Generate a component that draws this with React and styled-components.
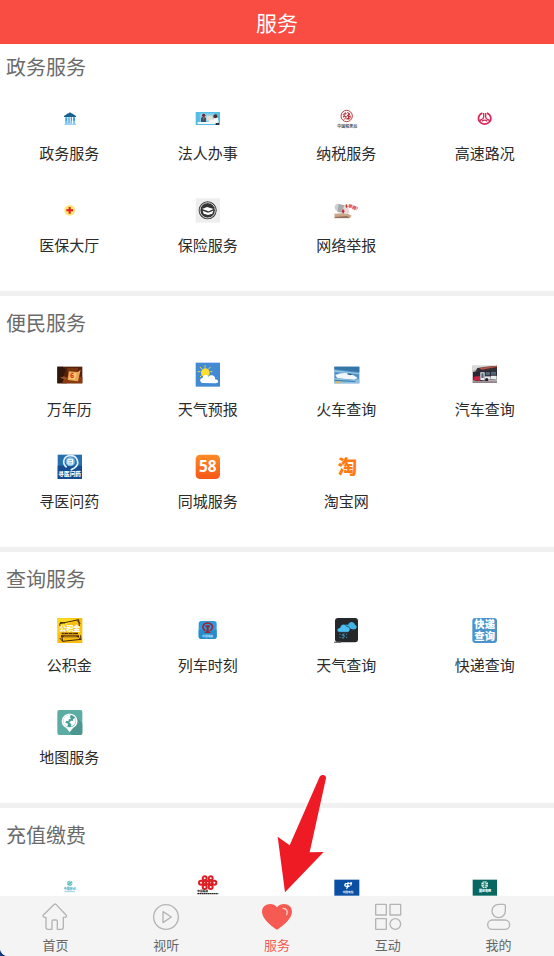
import styled, { createGlobalStyle, css } from "styled-components";

const GlobalStyle = createGlobalStyle`
  * {
    box-sizing: border-box;
  }

  body {
    margin: 0;
    background: #123a86;
    font-family: "Noto Sans CJK SC", sans-serif;
  }
`;

const Shell = styled.div`
  display: flex;
  flex-direction: column;
  height: 100vh;
  background: #fff;
  border-bottom-left-radius: 8px;
  overflow: hidden;
`;

const Header = styled.header`
  flex: none;
  display: flex;
  align-items: center;
  justify-content: center;
  height: 44px;
  background: #f94d43;
`;

const PageTitle = styled.h1`
  margin: 0;
  font-size: 21px;
  font-weight: 400;
  line-height: 32px;
  color: #fff;
`;

const Main = styled.main`
  flex: 1;
  min-height: 0;
  overflow-y: auto;
  scrollbar-width: none;
`;

const StyledSection = styled.section`
  margin-bottom: 4px;
  padding-bottom: 17px;
  border-bottom: 5px solid #f1f1f1;
`;

const SectionTitle = styled.h2`
  margin: 0;
  padding: 0 6px;
  font-size: 20px;
  font-weight: 400;
  line-height: 46px;
  color: #6b6b6b;
`;

const Grid = styled.div`
  display: grid;
  grid-template-columns: repeat(4, 1fr);
`;

const Service = styled.a`
  display: flex;
  flex-direction: column;
  align-items: center;
  gap: 11px;
  height: 92px;
  padding-top: 16px;
  font-size: 15px;
  line-height: 22px;
  color: #2b2b2b;
  text-decoration: none;
`;

const Picture = styled.svg`
  flex: none;
  display: block;
  width: 25px;
  height: 25px;
  overflow: visible;
  font-family: "Noto Sans CJK SC", sans-serif;
`;

const Nav = styled.nav`
  flex: none;
  display: grid;
  grid-template-columns: repeat(5, 1fr);
  height: 60px;
  background: #f4f4f4;
`;

const Tab = styled.a`
  position: relative;
  display: flex;
  flex-direction: column;
  align-items: center;
  gap: 4px;
  padding-top: 7px;
  font-size: 13px;
  line-height: 20px;
  color: #666;
  text-decoration: none;

  ${(props) =>
    props.$active &&
    css`
      color: #f65b53;
    `}
`;

const TabIcon = styled.svg`
  flex: none;
  display: block;
  width: 28px;
  height: 28px;
  overflow: visible;
  fill: none;
  stroke: #b4b4b6;
  stroke-width: 4;
  stroke-linejoin: round;
`;

const Arrow = styled.svg`
  position: absolute;
  left: 50%;
  bottom: 63px;
  width: 50px;
  height: 119px;
  fill: #ee1b24;
  pointer-events: none;
`;

// every picture is drawn on a 75 x 75 canvas
const pictures = {
  government: (
    <>
      <path d="M21 30 33 22h3l3-4 3 4h2l13 8v3H21z" fill="#17608f" />
      <path d="M25 34h6v19h-6zM34 34h4v19h-4zM41 34h4v19h-4zM48 34h6v19h-6z" fill="#3d9fe0" />
      <path d="M25 44h6v9h-6zM34 44h4v9h-4zM41 44h4v9h-4zM48 44h6v9h-6z" fill="#7cc8f4" />
      <path d="M22 53h35v4H22z" fill="#9ed4f3" />
    </>
  ),
  legal: (
    <>
      <path d="M2 18h73v39H2z" fill="#55bde5" />
      <path d="M14 22h46v27H14z" fill="#86cdea" />
      <path d="M35 29h18v15H35z" fill="#e8ddcb" />
      <path d="M18 48V36l5-4h5l5 5v11z" fill="#3d5066" />
      <circle cx="26" cy="28" r="5" fill="#6b2c32" />
      <path d="m24 34 2 9 3-9z" fill="#e8584c" />
      <path d="M40 48c6-8 10-8 15-7l5-10 9 5 2 14z" fill="#f8f9f9" />
      <circle cx="61" cy="31" r="6" fill="#473035" />
      <path d="M8 48h59v6H8z" fill="#f3f7f8" />
      <path d="M62 51h10v6H62z" fill="#263241" />
    </>
  ),
  tax: (
    <>
      <circle cx="38" cy="30" r="17" fill="#fff" stroke="#bd3c41" strokeWidth="3" />
      <path
        d="M26 26q6-4 12-3M34 19q0 8-7 14M27 33q7-3 11-1l-8 9M40 19l8 5-9 5 11 4M43 22q3 10-1 20M36 39q7-4 12 0M48 28v9"
        fill="none"
        stroke="#b62d34"
        strokeWidth="3"
      />
      <text x="40" y="65" fontSize="12" fontWeight="700" textAnchor="middle" fill="#555">
        中国税务局
      </text>
    </>
  ),
  highway: (
    <g fill="none" stroke="#d92455" strokeWidth="5">
      <path d="M31 21c-14 6-15 22-5 29M45 21c14 6 15 22 5 29M26 50c7 5 17 5 24 0" />
      <path d="M35 21v12q0 5-7 8l-5 3M41 21v12q0 5 7 8l5 3" strokeWidth="4" />
      <path d="M30 46q8-7 16 0" strokeWidth="4" />
    </g>
  ),
  medical: (
    <>
      <circle cx="38" cy="37" r="17" fill="#fff0a0" />
      <circle cx="38" cy="37" r="14" fill="#ffe36d" />
      <path d="M35 27h6v7h7v6h-7v7h-6v-7h-7v-6h7z" fill="#e71919" />
    </>
  ),
  insurance: (
    <>
      <path d="M2 1h73v73H2z" fill="#eee" />
      <circle cx="38" cy="37" r="27" fill="#333" />
      <circle cx="38" cy="37" r="23" fill="none" stroke="#ddd" strokeWidth="3" />
      <path d="m21 33 15-6 20 6-15 7zM23 38l16 6 16-6-3 9-13 4-13-4z" fill="#fff" />
    </>
  ),
  report: (
    <>
      <path d="m1 47 36-2 16 8-6 8H2z" fill="#cba783" />
      <path d="m2 57 37-3 8 6H2z" fill="#92705b" />
      <circle cx="13" cy="28" r="11" fill="#cbd0d5" />
      <path d="m14 18 18 4-2 23-20-3z" fill="#aaa9aa" />
      <path d="m22 39 8-13 10-5 7 23-13 5z" fill="#ead7d6" />
      <path d="m23 40 4-8 5 7-4 8zM34 22l4-4 3 9-4 3z" fill="#b93337" />
      <text x="41" y="27" fontSize="13" fontWeight="900" fill="#df4b54" transform="rotate(20 41 27)">
        举报!
      </text>
    </>
  ),
  calendar: (
    <>
      <path d="M1 14h75v50H1z" fill="#542008" />
      <path d="M1 14h17l8 10-7 18 11 22H1z" fill="#32160b" />
      <path d="M31 18h32v11H31z" fill="#783310" />
      <path d="m20 52 21-14 35 7v19H15z" fill="#8b3a10" />
      <path d="m35 28 27 2 9-7-8 35-31-4z" fill="#eda553" />
      <path d="m39 32 20 2-5 19-18-3z" fill="#ffcb79" />
      <text x="39" y="49" fontSize="20" fontWeight="900" fill="#d32c13">6</text>
      <path d="m8 47 13-4 9 5-5 5z" fill="#9b5222" />
    </>
  ),
  weather: (
    <>
      <path d="M2 2h73v72H2z" fill="#438ad5" />
      <path
        d="M30 10v7M15 15l5 6M46 15l-5 6M8 29h8M15 45l5-5M52 29h-6"
        stroke="#f1d743"
        strokeWidth="3"
      />
      <circle cx="31" cy="32" r="13" fill="#ffde32" />
      <path
        d="M25 63c-11 0-13-14-2-16 1-8 12-11 17-3 9-9 23-1 20 8 13 1 12 12 1 12z"
        fill="#fff"
      />
    </>
  ),
  train: (
    <>
      <path d="M1 14h75v50H1z" fill="#528fc4" />
      <path d="M1 14h75v16L1 22z" fill="#3576a9" />
      <path d="m1 24 75 9v4L1 30z" fill="#91c4df" />
      <path d="M4 39c20-9 45-9 67 9l-10 5-51-4z" fill="#f1f7fa" />
      <path d="m42 34 13 3-5 3-11-3z" fill="#245983" />
      <path d="m1 48 56 6 19-3v13H1z" fill="#8fc0dd" />
      <path d="m1 53 66 4-6 3-58-3z" fill="#3b80b5" />
      <path d="m5 58 18 1-7 5H4z" fill="#e3b865" />
    </>
  ),
  bus: (
    <>
      <path d="M1 11h74v52H1z" fill="#b7adaf" />
      <path d="M1 11h42L1 27z" fill="#d6dadd" />
      <path d="m16 18 59-7v18H10z" fill="#353038" />
      <path d="m22 18 53-7v4l-46 8z" fill="#b65543" />
      <path d="m3 30 19-3 53-1v25l-58 7-14-4z" fill="#282733" />
      <path d="m5 44 19-2v15l-19-2z" fill="#cb2244" />
      <path d="M25 31h13v23H25zM57 41h17v11H57z" fill="#e7edf0" />
      <path d="M28 34h7v14h-7zM41 30h13v10H41zM57 29h15v9H57z" fill="#536979" />
      <path d="M38 43h18v10H38z" fill="#e6e4e6" />
      <circle cx="44" cy="53" r="5" fill="#252028" />
      <path d="M3 58h72v5H3z" fill="#91858b" />
    </>
  ),
  doctor: (
    <>
      <path d="M2 2h73v73H2z" fill="#2770b0" />
      <path d="M2 35h73v40H2z" fill="#164d90" />
      <path
        d="M29 40C13 28 20 6 39 5c23-1 31 26 13 37L41 48"
        fill="none"
        stroke="#e1f1fc"
        strokeWidth="5"
      />
      <circle cx="40" cy="23" r="14" fill="#7eb9df" />
      <path d="M33 16h14v14H33zM33 23h14" fill="none" stroke="#fff" strokeWidth="3" />
      <text x="38" y="66" fontSize="17" fontWeight="900" textAnchor="middle" fill="#fff">
        寻医问药
      </text>
    </>
  ),
  city58: (
    <>
      <defs>
        <linearGradient id="orange" x2="0" y2="1">
          <stop stopColor="#ff8b24" />
          <stop offset="1" stopColor="#f75718" />
        </linearGradient>
      </defs>
      <rect x="2" y="2" width="73" height="73" rx="13" fill="url(#orange)" />
      <text x="38" y="54" fontSize="46" fontFamily="Open Sans" fontWeight="700" textAnchor="middle" fill="#fff">
        58
      </text>
    </>
  ),
  taobao: (
    <text x="40" y="61" fontSize="58" fontWeight="900" textAnchor="middle" fill="#ff7b12">
      淘
    </text>
  ),
  fund: (
    <>
      <path d="M1 0h75v75H1z" fill="#f8bf12" />
      <path d="m1 0 55 3L30 20 1 50z" fill="#ffda22" />
      <path
        d="m8 17 57-12 7 59-55 6zM9 13l15 2M60 7l10 11M8 60l9 10M65 58l8 8"
        fill="none"
        stroke="#44290f"
        strokeWidth="3"
      />
      <path d="M5 24h67v28H5z" fill="#f9c414" />
      <text x="38" y="40" fontSize="21" fontWeight="900" textAnchor="middle" fill="#fff">
        公积金
      </text>
      <path d="M14 44h49v5H14zM12 52h54v6H12z" fill="#51260f" />
      <path d="m17 51 7-7m6 7 7-7m6 7 7-7M20 55h39" stroke="#e6aa18" strokeWidth="2" />
    </>
  ),
  railway: (
    <>
      <rect x="11" y="9" width="54" height="54" rx="8" fill="#2c9bdb" />
      <path d="M11 36h54v19q0 8-8 8H19q-8 0-8-8z" fill="#278ccb" />
      <path
        d="M31 38c-15-12-4-23 7-23s22 11 7 23"
        fill="none"
        stroke="#9b2637"
        strokeWidth="5"
      />
      <path d="M31 22h14v6h-4v10l7 7H28l7-7V28h-4z" fill="#9b2637" />
      <text x="38" y="57" fontSize="8" fontWeight="700" textAnchor="middle" fill="#c8ebff">
        中国铁路
      </text>
    </>
  ),
  rain: (
    <>
      <rect x="3" y="0" width="69" height="73" rx="9" fill="#25282b" />
      <path d="M0 71h21v4H0z" fill="#777" />
      <path
        d="M29 28c0-8 9-11 13-7 5-12 17-11 21-1 11 6 3 16-8 14z"
        fill="#43b4e8"
      />
      <path
        d="M18 43c-13-1-10-14 0-14 3-14 17-12 20-4 12 0 14 16 3 18z"
        fill="#4bc0f2"
        stroke="#25282b"
        strokeWidth="2"
      />
      <path
        d="M18 47v4M18 56v4M38 47v4M38 56v4M25 48v5M25 57v4M31 45l-4 8h5l-5 9"
        fill="none"
        stroke="#49bce8"
        strokeWidth="2"
      />
    </>
  ),
  express: (
    <>
      <rect x="1" y="0" width="74" height="75" rx="9" fill="#4b94cb" />
      <text fontSize="31" fontWeight="900" fill="#fff">
        <tspan x="7" y="31">快递</tspan>
        <tspan x="7" y="65">查询</tspan>
      </text>
    </>
  ),
  map: (
    <>
      <rect x="1" y="0" width="75" height="75" rx="6" fill="#5baca3" />
      <path d="m53 17 23 23v29q0 6-6 6H45L28 57z" fill="#4b968f" />
      <path d="M38 67 27 53C6 44 12 11 38 11s32 33 11 42z" fill="#fff" />
      <circle cx="38" cy="33" r="19" fill="#4ba19a" />
      <path
        d="M20 26c3-8 13-13 22-10l-4 5 4 5-6 2-2 6-6-2-3 6 8 3-2 9c-9-3-14-13-11-24zM49 27l6-3q4 12-5 22l-8 4 1-8-6-4 5-6 5 1z"
        fill="#fff"
      />
    </>
  ),
  mobile: (
    <>
      <circle cx="38" cy="28" r="8" fill="#5cbec0" />
      <path d="m30 29 12-8m-8 14 12-8" stroke="#d5f2ef" strokeWidth="2" />
      <text x="38" y="49" fontSize="9" fontWeight="900" textAnchor="middle" fill="#57b4cd">
        中国移动
      </text>
      <path d="M22 53h32" stroke="#9bd1df" strokeWidth="3" />
    </>
  ),
  unicom: (
    <>
      <g fill="none" stroke="#de1e25" strokeWidth="6">
        <circle cx="29" cy="13" r="6" />
        <circle cx="47" cy="13" r="6" />
        <circle cx="18" cy="26" r="6" />
        <circle cx="38" cy="26" r="5" />
        <circle cx="58" cy="26" r="6" />
        <circle cx="29" cy="39" r="6" />
        <circle cx="47" cy="39" r="6" />
        <path d="m24 26 9-9m19 9-9-9M24 26l9 9m19-9-9 9" />
      </g>
      <text x="7" y="55" fontSize="8" fontWeight="900" fill="#222">中国联通</text>
      <path d="M7 59h63" stroke="#222" strokeWidth="4" strokeDasharray="5 1" />
    </>
  ),
  telecom: (
    <>
      <path d="M1 17h75v48H1z" fill="#094fa3" />
      <path
        d="M34 30c-5 6 3 9 13 6M33 29c7-1 16 1 20-4M43 25c-4 8 1 16-6 19M53 25l-3 10"
        fill="none"
        stroke="#fff"
        strokeWidth="4"
      />
      <text x="42" y="57" fontSize="8" fontWeight="700" textAnchor="middle" fill="#fff">
        中国电信
      </text>
    </>
  ),
  grid: (
    <>
      <path d="M2 17h73v48H2z" fill="#066861" />
      <circle cx="38" cy="32" r="10" fill="#e8f4ef" />
      <path
        d="M28 32h20M38 22v20M31 25q7 7 14 0M31 39q7-7 14 0"
        fill="none"
        stroke="#066861"
        strokeWidth="2"
      />
      <text x="39" y="53" fontSize="9" fontWeight="900" textAnchor="middle" fill="#fff">
        国家电网
      </text>
    </>
  ),
};

const sections = [
  {
    title: "政务服务",
    items: [
      ["government", "政务服务"],
      ["legal", "法人办事"],
      ["tax", "纳税服务"],
      ["highway", "高速路况"],
      ["medical", "医保大厅"],
      ["insurance", "保险服务"],
      ["report", "网络举报"],
    ],
  },
  {
    title: "便民服务",
    items: [
      ["calendar", "万年历"],
      ["weather", "天气预报"],
      ["train", "火车查询"],
      ["bus", "汽车查询"],
      ["doctor", "寻医问药"],
      ["city58", "同城服务"],
      ["taobao", "淘宝网"],
    ],
  },
  {
    title: "查询服务",
    items: [
      ["fund", "公积金"],
      ["railway", "列车时刻"],
      ["rain", "天气查询"],
      ["express", "快递查询"],
      ["map", "地图服务"],
    ],
  },
  {
    title: "充值缴费",
    logosOnly: true,
    items: [
      ["mobile", "中国移动"],
      ["unicom", "中国联通"],
      ["telecom", "中国电信"],
      ["grid", "国家电网"],
    ],
  },
];

const tabs = [
  {
    label: "首页",
    icon: (
      <path d="M40 4 7 36c-3 4 0 8 8 7v30q0 6 6 6h12V55q0-4 4-4h8q4 0 4 4v24h12q6 0 6-6V43c9 1 12-3 8-7L45 4q-3-2-5 0z" />
    ),
  },
  {
    label: "视听",
    icon: (
      <>
        <circle cx="42" cy="42" r="37" />
        <path d="M33 26v33l25-17z" />
      </>
    ),
  },
  {
    label: "服务",
    active: true,
    icon: (
      <>
        <path
          d="M42 80C31 74-3 48-3 26-3 3 28-5 42 13 57-5 87 3 87 26c0 22-34 48-45 54z"
          fill="#f65b53"
          stroke="none"
        />
        <path d="M60 16c10 0 16 9 11 19" stroke="#ffd5d1" strokeLinecap="round" />
      </>
    ),
  },
  {
    label: "互动",
    icon: (
      <>
        <rect x="5" y="4" width="32" height="32" rx="1" />
        <rect x="48" y="4" width="32" height="32" rx="1" />
        <rect x="5" y="47" width="32" height="32" rx="1" />
        <circle cx="64" cy="63" r="16" />
      </>
    ),
  },
  {
    label: "我的",
    icon: (
      <>
        <path d="M41 4h16q4 0 4 4v16a20 20 0 1 1-20-20z" />
        <rect x="8" y="51" width="66" height="28" rx="14" />
      </>
    ),
  },
];

function Section({ title, items, logosOnly }) {
  return (
    <StyledSection>
      <SectionTitle>{title}</SectionTitle>
      <Grid>
        {items.map(([picture, label]) => (
          <Service href="#" key={label} aria-label={label}>
            <Picture viewBox="0 0 75 75" aria-hidden="true">
              {pictures[picture]}
            </Picture>
            {!logosOnly && <span>{label}</span>}
          </Service>
        ))}
      </Grid>
    </StyledSection>
  );
}

function App() {
  return (
    <>
      <GlobalStyle />
      <Shell>
        <Header>
          <PageTitle>服务</PageTitle>
        </Header>
        <Main>
          {sections.map((section) => (
            <Section key={section.title} {...section} />
          ))}
        </Main>
        <Nav>
          {tabs.map(({ label, icon, active }) => (
            <Tab href="#" key={label} $active={active} aria-current={active ? "page" : undefined}>
              <TabIcon viewBox="0 0 84 84" aria-hidden="true">
                {icon}
              </TabIcon>
              <span>{label}</span>
              {active && (
                <Arrow viewBox="51 27 150 357" aria-hidden="true">
                  <path d="M75 382 53 215l36 26 90-206c5-9 21-6 19 5l-49 222 42-1z" />
                </Arrow>
              )}
            </Tab>
          ))}
        </Nav>
      </Shell>
    </>
  );
}

export default App;
